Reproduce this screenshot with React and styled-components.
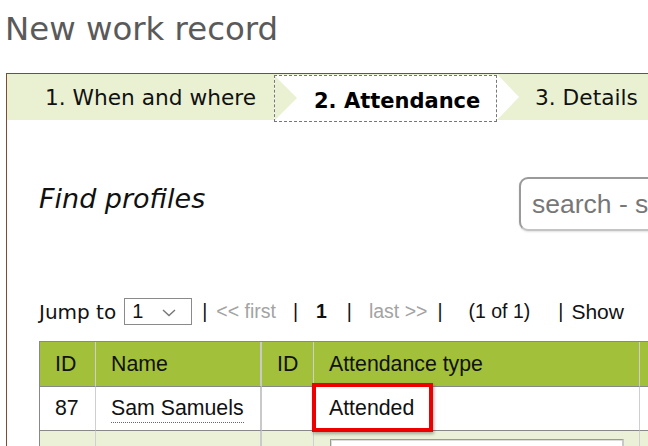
import styled, { createGlobalStyle } from 'styled-components'

const GlobalStyle = createGlobalStyle`
  body {
    margin: 0;
    background: #fff;
    overflow: hidden;
    font-family: 'DejaVu Sans', Verdana, sans-serif;
    color: #111;
  }
`

const steps = [
  { label: '1. When and where', width: 267, pad: 38 },
  { label: '2. Attendance', width: 223, pad: 39, active: true },
  { label: '3. Details', pad: 38 },
]

const pager = [
  { text: '|', ml: 10 },
  { text: '<< first', ml: 9, muted: true },
  { text: '|', ml: 17 },
  { text: '1', ml: 18, bold: true },
  { text: '|', ml: 20 },
  { text: 'last >>', ml: 17, muted: true },
  { text: '|', ml: 10 },
  { text: '(1 of 1)', ml: 26 },
  { text: '|', ml: 28 },
  { text: 'Show', ml: 8, big: true },
]

function App() {
  return (
    <Page>
      <GlobalStyle />
      <Title>New work record</Title>
      <Panel>
        <Wizard>
          {steps.map((s) => (
            <Step key={s.label} $width={s.width} $pad={s.pad} $active={s.active}>
              {s.label}
            </Step>
          ))}
        </Wizard>

        <Content>
          <SearchRow>
            <Heading>Find profiles</Heading>
            <SearchInput placeholder='search - surname, first name or ID' />
          </SearchRow>

          <Pager>
            <JumpLabel>Jump to</JumpLabel>
            <PageSelect>
              <span>1</span>
              <svg width='14' height='8' viewBox='0 0 14 8'>
                <path d='M1 1l6 5.5L13 1' fill='none' stroke='#777' strokeWidth='1.4' />
              </svg>
            </PageSelect>
            {pager.map((p, i) => (
              <PagerText key={i} $ml={p.ml} $muted={p.muted} $bold={p.bold} $big={p.big}>
                {p.text}
              </PagerText>
            ))}
          </Pager>

          <Table>
            <colgroup>
              <col style={{ width: 56 }} />
              <col style={{ width: 166 }} />
              <col style={{ width: 52 }} />
              <col style={{ width: 326 }} />
              <col style={{ width: 100 }} />
            </colgroup>
            <thead>
              <tr>
                <Th>ID</Th>
                <Th $thick>Name</Th>
                <Th>ID</Th>
                <Th>Attendance type</Th>
                <Th />
              </tr>
            </thead>
            <tbody>
              <tr>
                <Td>87</Td>
                <Td $thick>
                  <PersonLink>Sam Samuels</PersonLink>
                </Td>
                <Td />
                <Td $marked>
                  Attended
                  <Highlight />
                </Td>
                <Td />
              </tr>
              <tr>
                <Td $alt />
                <Td $alt $thick />
                <Td $alt />
                <Td $alt $tall>
                  <RowInput />
                </Td>
                <Td $alt />
              </tr>
            </tbody>
          </Table>
        </Content>
      </Panel>
    </Page>
  )
}
export default App

const Page = styled.div`
  padding: 10px 0 0 6px;
  width: 900px;
`

const Title = styled.h1`
  margin: 0 0 25px -1px;
  font: normal 32.4px/38px 'DejaVu Sans', Verdana, sans-serif;
  color: #5a5a5a;
`

const Panel = styled.section`
  border: 1px solid #7e4c2e;
  border-right: none;
  border-bottom: none;
  height: 420px;
`

const Wizard = styled.div`
  display: flex;
  height: 46px;
  background: #eaf1d3;
`

const Step = styled.div`
  position: relative;
  display: flex;
  align-items: center;
  box-sizing: border-box;
  flex: ${(p) => (p.$width ? `0 0 ${p.$width}px` : '1 1 auto')};
  padding-left: ${(p) => p.$pad}px;
  font-size: 21.7px;
  white-space: nowrap;
  color: #111;

  ${(p) =>
    p.$active &&
    `
    height: 47px;
    margin-top: 1px;
    padding-top: 4px;
    border: 1px dashed #777;
    background: #fff;
    font-size: 21px;
    font-weight: bold;
    color: #000;

    &::before {
      content: '';
      position: absolute;
      left: 0;
      top: 0;
      border-left: 22px solid #eaf1d3;
      border-top: 22.5px solid transparent;
      border-bottom: 22.5px solid transparent;
    }

    &::after {
      content: '';
      position: absolute;
      right: -23px;
      top: -2px;
      z-index: 1;
      border-left: 22px solid #fff;
      border-top: 23px solid transparent;
      border-bottom: 23px solid transparent;
    }
  `}
`

const Content = styled.div`
  padding-left: 32px;
`

const SearchRow = styled.div`
  display: flex;
  align-items: flex-start;
  margin-top: 57px;
`

const Heading = styled.h2`
  flex: 0 0 480px;
  margin: 6px 0 0;
  font: italic normal 27px/32px 'DejaVu Sans', Verdana, sans-serif;
  color: #111;
`

const SearchInput = styled.input`
  width: 300px;
  height: 54px;
  box-sizing: border-box;
  padding: 0 11px;
  border: 2px solid #9a9a9a;
  border-bottom-color: #c4c4c4;
  border-radius: 9px;
  box-shadow: 0 1px 2px rgba(0, 0, 0, 0.12);
  font: 26.5px 'Liberation Sans', Arial, sans-serif;
  outline: none;

  &::placeholder {
    color: #777;
  }
`

const Pager = styled.div`
  display: flex;
  align-items: center;
  height: 27px;
  margin-top: 67px;
  font: 19.5px 'Liberation Sans', Arial, sans-serif;
  white-space: nowrap;
`

const JumpLabel = styled.span`
  margin-right: 8px;
  font-family: 'DejaVu Sans', Verdana, sans-serif;
  font-size: 20px;
`

const PageSelect = styled.div`
  display: flex;
  align-items: center;
  justify-content: space-between;
  box-sizing: border-box;
  width: 68px;
  height: 27px;
  padding: 0 15px 0 7px;
  border: 1px solid #8a8a8a;
  font-size: 20px;

  svg {
    margin-top: 2px;
  }
`

const PagerText = styled.span`
  margin-left: ${(p) => p.$ml}px;
  color: ${(p) => (p.$muted ? '#a3a3a3' : '#111')};
  font-weight: ${(p) => (p.$bold ? 'bold' : 'normal')};
  font-size: ${(p) => (p.$big ? '21px' : 'inherit')};
`

const Table = styled.table`
  margin-top: 16px;
  table-layout: fixed;
  border-collapse: separate;
  border-spacing: 0;
  width: 700px;
  border-top: 1px solid #888;
  border-left: 1px solid #888;
  font: 21.3px 'Liberation Sans', Arial, sans-serif;
  color: #111;
`

const Th = styled.th`
  box-sizing: border-box;
  height: 45px;
  padding: 0 0 0 15px;
  text-align: left;
  font-weight: normal;
  background: #a2c039;
  border-bottom: 1px solid #888;
  border-right: ${(p) => (p.$thick ? '2px solid #c9c9c9' : '1px solid #cfcfcf')};
`

const Td = styled.td`
  position: ${(p) => (p.$marked ? 'relative' : 'static')};
  box-sizing: border-box;
  height: ${(p) => (p.$tall ? '40px' : '44px')};
  padding: ${(p) => (p.$tall ? '8px 0 0 16px' : '0 0 0 15px')};
  vertical-align: ${(p) => (p.$tall ? 'top' : 'middle')};
  background: ${(p) => (p.$alt ? '#ebf1d6' : '#fff')};
  border-bottom: ${(p) => (p.$alt ? 'none' : '1px solid #888')};
  border-right: ${(p) => (p.$thick ? '2px solid #c9c9c9' : '1px solid #cfcfcf')};
`

const PersonLink = styled.span`
  border-bottom: 1px dotted #666;
  padding-bottom: 2px;
`

const Highlight = styled.span`
  position: absolute;
  left: -2px;
  top: -4px;
  width: 121px;
  height: 49px;
  box-sizing: border-box;
  border: 4px solid #ee0000;
  box-shadow: 1px 2px 3px rgba(0, 0, 0, 0.3);
  pointer-events: none;
`

const RowInput = styled.div`
  width: 294px;
  height: 30px;
  box-sizing: border-box;
  background: #fff;
  border: 1px solid #9a9a9a;
  border-right: 2px solid #c8c8c8;
  box-shadow: inset 1px 1px 0 #ddd;
`
